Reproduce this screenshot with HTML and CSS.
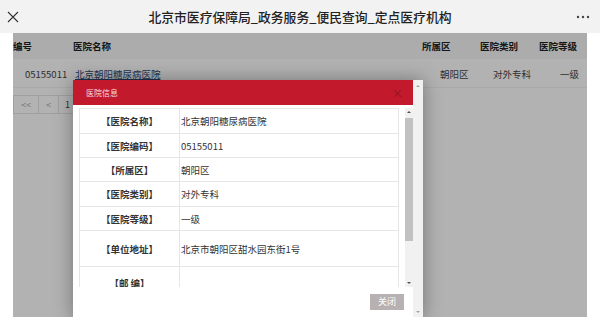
FILE: index.html
```html
<!DOCTYPE html>
<html lang="zh-CN">
<head>
    <meta charset="utf-8">
    <title>定点医疗机构</title>
    <link rel="stylesheet" href="styles.css">
</head>
<body>
    <div class="topbar">
        <div class="side side-left">
            <svg width="12" height="12" viewBox="0 0 12 12">
                <path d="M1 1 L11 11 M11 1 L1 11" stroke="#333" stroke-width="1.1" fill="none"/>
            </svg>
        </div>
        <div class="title">北京市医疗保障局_政务服务_便民查询_定点医疗机构</div>
        <div class="side side-right">
            <svg width="14" height="4" viewBox="0 0 14 4">
                <circle cx="2" cy="2" r="1.2" fill="#444"/>
                <circle cx="7" cy="2" r="1.2" fill="#444"/>
                <circle cx="12" cy="2" r="1.2" fill="#444"/>
            </svg>
        </div>
    </div>

    <div class="page">
        <div class="sheet">
            <div class="grid grid-head">
                <div class="c1">编号</div>
                <div class="c2">医院名称</div>
                <div class="c3">所属区</div>
                <div class="c4">医院类别</div>
                <div class="c5">医院等级</div>
            </div>
            <div class="grid grid-row">
                <div class="c1">05155011</div>
                <div class="c2"><a href="#">北京朝阳糖尿病医院</a></div>
                <div class="c3">朝阳区</div>
                <div class="c4">对外专科</div>
                <div class="c5">一级</div>
            </div>
            <div class="pager">
                <span class="pg pg-first">&lt;&lt;</span>
                <span class="pg pg-prev">&lt;</span>
                <span class="pg pg-num">1</span>
            </div>

            <div class="mask"></div>

            <div class="modal">
                <div class="modal-main">
                    <div class="modal-head">
                        <span class="modal-title">医院信息</span>
                        <span class="modal-x">×</span>
                    </div>
                    <div class="modal-body">
                        <div class="detail-scroll">
                            <table class="detail">
                                <tr class="r25"><th>【医院名称】</th><td>北京朝阳糖尿病医院</td></tr>
                                <tr class="r24"><th>【医院编码】</th><td>05155011</td></tr>
                                <tr class="r24"><th>【所属区】</th><td>朝阳区</td></tr>
                                <tr class="r25"><th>【医院类别】</th><td>对外专科</td></tr>
                                <tr class="r24"><th>【医院等级】</th><td>一级</td></tr>
                                <tr class="r36"><th>【单位地址】</th><td>北京市朝阳区甜水园东街1号</td></tr>
                                <tr class="r40"><th class="low">【邮 编】</th><td></td></tr>
                            </table>
                        </div>
                        <div class="inner-bar">
                            <span class="arr-up dark"></span>
                            <span class="thumb"></span>
                            <span class="fill"></span>
                            <span class="arr-down dark"></span>
                        </div>
                    </div>
                    <div class="modal-foot">
                        <span class="btn-close">关闭</span>
                    </div>
                </div>
                <div class="outer-bar">
                    <span class="arr-up"></span>
                    <span class="fill"></span>
                    <span class="arr-down"></span>
                </div>
            </div>
        </div>
    </div>
</body>
</html>
```

FILE: styles.css
```css
body {
    margin: 0;
    padding: 0;
    width: 600px;
    height: 317px;
    overflow: hidden;
    background-color: #fff;
    color: #333;
    font-family: "Noto Sans CJK SC", "Liberation Sans", sans-serif;
}

.topbar {
    height: 33px;
    background-color: #f2f2f2;
    display: flex;
    align-items: center;
}

.side {
    width: 40px;
    display: flex;
}

.side-left {
    padding-left: 7px;
    width: 33px;
}

.side-right {
    justify-content: flex-end;
    padding-right: 10px;
    width: 30px;
}

.title {
    flex: 1;
    text-align: center;
    font-size: 12.8px;
    font-weight: 500;
    color: #222;
}

.page {
    padding: 0 13px;
}

.sheet {
    position: relative;
    height: 284px;
    background-color: #fff;
    overflow: hidden;
}

.grid {
    display: grid;
    grid-template-columns: 60px 349px 58px 59px 48px;
    align-items: center;
    font-size: 9.5px;
}

.grid-head {
    height: 26px;
    font-weight: bold;
    color: #222;
    background-color: #f6f6f6;
    border-bottom: 1px solid #ffffff;
}

.grid-row {
    height: 27px;
    color: #444;
    border-bottom: 1px solid #f2f2f2;
}

.grid-row .c1 { padding-left: 12px; }
.grid-row .c2 { padding-left: 2px; }
.grid-row .c3 { padding-left: 18px; }
.grid-row .c4 { padding-left: 13px; }
.grid-row .c5 { padding-left: 21px; }

.grid-row a {
    color: #2f4a78;
}

.pager {
    display: flex;
    margin-top: 7px;
    height: 19px;
}

.pg {
    border: 1px solid #e4e4e4;
    margin-right: -1px;
    font-size: 9px;
    color: #aaa;
    display: flex;
    align-items: center;
    justify-content: center;
}

.pg-first { width: 24px; }
.pg-prev { width: 19px; }
.pg-num { width: 17px; color: #444; }

.mask {
    position: absolute;
    top: 0;
    left: 0;
    right: 0;
    bottom: 0;
    background-color: rgba(0, 0, 0, 0.3);
}

.modal {
    position: absolute;
    left: 60px;
    top: 47px;
    width: 350px;
    height: 240px;
    display: flex;
    background-color: #fff;
    box-shadow: 0 0 18px rgba(0, 0, 0, 0.35);
}

.modal-main {
    width: 340px;
    display: flex;
    flex-direction: column;
}

.modal-head {
    height: 25px;
    background-color: #c3192c;
    display: flex;
    align-items: center;
    justify-content: space-between;
    padding: 0 10px 0 13px;
}

.modal-title {
    font-size: 8px;
    color: #f6dde0;
}

.modal-x {
    font-size: 11px;
    color: #8a1522;
}

.modal-body {
    height: 179px;
    padding: 3px 0 0 6px;
    display: flex;
}

.detail-scroll {
    width: 320px;
    height: 179px;
    overflow: hidden;
}

.detail {
    width: 320px;
    border-collapse: collapse;
    font-size: 9.5px;
    color: #333;
}

.detail th,
.detail td {
    border: 1px solid #e6e6e6;
    padding: 0;
}

.detail th {
    width: 99px;
    font-size: 9.5px;
    text-align: center;
}

.detail td {
    padding-left: 1px;
}

.detail th.low {
    vertical-align: top;
    padding-top: 9px;
}

.r25 { height: 25px; }
.r24 { height: 24px; }
.r36 { height: 36px; }
.r40 { height: 40px; }

.inner-bar {
    width: 8px;
    margin-left: 6px;
    background-color: #f1f1f1;
    display: flex;
    flex-direction: column;
    align-items: center;
}

.thumb {
    width: 8px;
    height: 123px;
    margin-top: 2px;
    background-color: #c1c1c1;
}

.fill {
    flex: 1;
}

.arr-up,
.arr-down {
    width: 0;
    height: 0;
    border-left: 2px solid transparent;
    border-right: 2px solid transparent;
    margin: 3px 0;
}

.arr-up { border-bottom: 2px solid #a3a3a3; }
.arr-down { border-top: 2px solid #a3a3a3; }
.arr-up.dark { border-bottom-color: #505050; }
.arr-down.dark { border-top-color: #505050; }

.modal-foot {
    height: 29px;
    display: flex;
    align-items: center;
    justify-content: flex-end;
    padding-right: 9px;
}

.btn-close {
    width: 34px;
    height: 16px;
    background-color: #b8b1b1;
    color: #fff;
    font-size: 9px;
    display: flex;
    align-items: center;
    justify-content: center;
}

.outer-bar {
    width: 10px;
    background-color: #f1f1f1;
    display: flex;
    flex-direction: column;
    align-items: center;
    padding: 2px 0 4px;
}
```
